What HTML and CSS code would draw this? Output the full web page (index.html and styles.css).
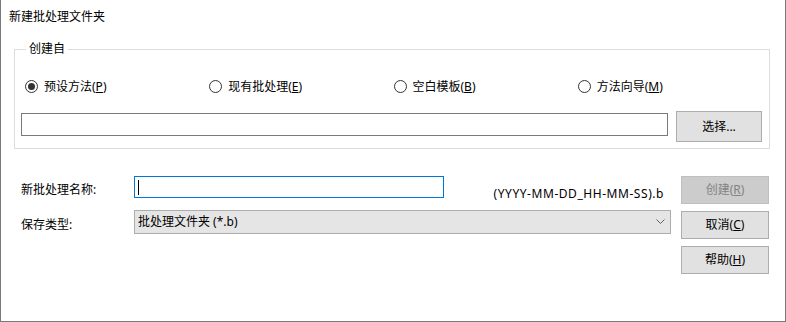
FILE: index.html
```html
<!DOCTYPE html>
<html lang="zh-CN">
<head>
  <meta charset="UTF-8">
  <title>新建批处理文件夹</title>
  <link rel="stylesheet" href="styles.css">
</head>
<body>
  <div class="dialog">
    <div class="title">新建批处理文件夹</div>

    <fieldset class="group">
      <legend>创建自</legend>
      <div class="radios">
        <label class="radio"><span class="dot checked"></span><span>预设方法(<u>P</u>)</span></label>
        <label class="radio"><span class="dot"></span><span>现有批处理(<u>E</u>)</span></label>
        <label class="radio"><span class="dot"></span><span>空白模板(<u>B</u>)</span></label>
        <label class="radio"><span class="dot"></span><span>方法向导(<u>M</u>)</span></label>
      </div>
      <div class="path-row">
        <div class="textbox path"></div>
        <button class="btn choose">选择...</button>
      </div>
    </fieldset>

    <div class="lower">
      <div class="fields">
        <div class="label">新批处理名称:</div>
        <div class="name-cell">
          <div class="textbox name focused"><span class="caret"></span></div>
          <span class="hint">(YYYY-MM-DD_HH-MM-SS).b</span>
        </div>
        <div class="label second">保存类型:</div>
        <div class="combo">
          <span>批处理文件夹 (*.b)</span>
          <svg width="9" height="6" viewBox="0 0 9 6"><path d="M0.5 0.5 L4.5 4.5 L8.5 0.5" fill="none" stroke="#606060" stroke-width="1"/></svg>
        </div>
      </div>
      <div class="buttons">
        <button class="btn disabled">创建(<u>R</u>)</button>
        <button class="btn">取消(<u>C</u>)</button>
        <button class="btn">帮助(<u>H</u>)</button>
      </div>
    </div>
  </div>
</body>
</html>
```

FILE: styles.css
```css
* { box-sizing: border-box; }
body {
  margin: 0;
  font-family: "Noto Sans", "Noto Sans CJK SC", sans-serif;
  font-size: 12px;
  line-height: 16px;
  color: #000;
  background: #fff;
}
.dialog {
  width: 786px;
  height: 322px;
  border: 1px solid #7a7a7a;
  border-top: none;
  background: #fff;
}
.title {
  padding: 8px 0 0 8px;
  height: 25px;
  line-height: 17px;
}
.group {
  margin: 16px 15px 0 13px;
  padding: 21px 7px 6px 6px;
  border: 1px solid #dcdcdc;
  min-width: 0;
}
.group legend {
  padding: 0 3px;
  margin-left: 5px;
  line-height: 16px;
}
.radios {
  display: flex;
  padding-left: 4px;
  height: 17px;
}
.radio {
  width: 185px;
  display: flex;
  align-items: center;
  gap: 6px;
}
.dot {
  width: 13px;
  height: 13px;
  border: 1px solid #333;
  border-radius: 50%;
  display: flex;
  align-items: center;
  justify-content: center;
}
.dot.checked::after {
  content: "";
  width: 7px;
  height: 7px;
  border-radius: 50%;
  background: #333;
}
.path-row {
  display: flex;
  gap: 8px;
  margin-top: 16px;
}
.textbox {
  border: 1px solid #7a7a7a;
  background: #fff;
}
.path {
  width: 647px;
  height: 23px;
  margin-top: 2px;
}
.btn {
  font: inherit;
  color: #000;
  background: #e1e1e1;
  border: 1px solid #adadad;
  padding: 0;
}
.choose {
  width: 86px;
  height: 31px;
}
.lower {
  display: flex;
  padding-left: 20px;
  margin-top: 27px;
}
.fields {
  width: 650px;
  display: grid;
  grid-template-columns: 113px 1fr;
  grid-template-rows: 22px 24px;
  row-gap: 12px;
  align-items: start;
}
.label {
  margin-top: 6px;
}
.label.second {
  margin-top: 7px;
}
.name-cell {
  display: flex;
  justify-content: space-between;
  height: 22px;
}
.name {
  width: 310px;
  height: 22px;
  padding: 3px 0 0 3px;
}
.focused {
  border-color: #0078d7;
}
.caret {
  display: block;
  width: 1px;
  height: 15px;
  background: #000;
}
.hint {
  margin-top: 10px;
  padding-right: 7px;
  white-space: nowrap;
  letter-spacing: 0.55px;
}
.combo {
  height: 24px;
  background: #e5e5e5;
  border: 1px solid #adadad;
  display: flex;
  align-items: center;
  justify-content: space-between;
  padding: 0 5px 0 3px;
}
.buttons {
  margin-left: 10px;
  display: flex;
  flex-direction: column;
  gap: 7px;
}
.buttons .btn {
  width: 88px;
  height: 28px;
}
.btn.disabled {
  background: #cccccc;
  border-color: #bfbfbf;
  color: #838383;
}
```
